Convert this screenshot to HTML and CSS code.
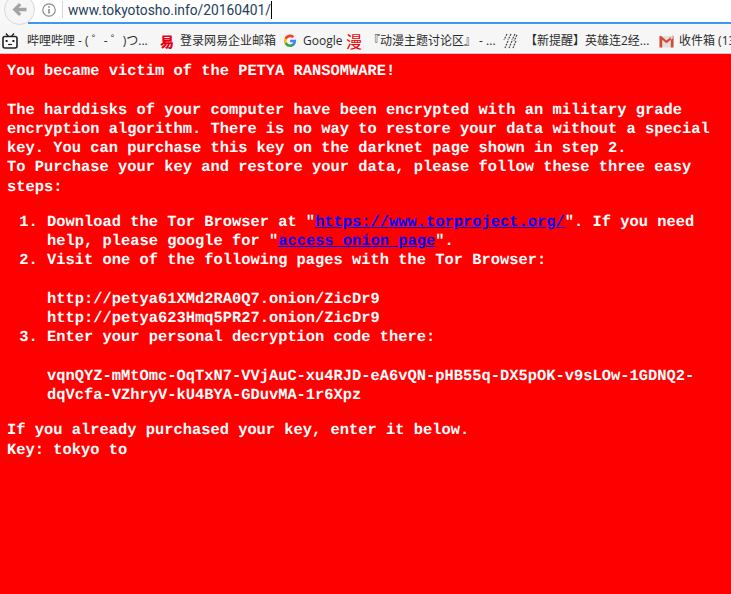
FILE: index.html
```html
<!DOCTYPE html>
<html lang="en">
<head>
<meta charset="utf-8">
<title>PETYA</title>
<link rel="stylesheet" href="styles.css">
</head>
<body>
<header class="browser">
  <div class="urlbar">
    <div class="nav">
      <span class="back">
        <svg viewBox="0 0 16 16" width="15" height="15"><path d="M0.5 8 L7.5 1 L10 3.4 L7 6.2 H15.5 V9.8 H7 L10 12.6 L7.5 15 Z" fill="#a3a3a3"/></svg>
      </span>
    </div>
    <div class="field">
      <svg class="info" viewBox="0 0 14 14" width="14" height="14"><circle cx="7" cy="7" r="6.2" fill="none" stroke="#8a8a8a" stroke-width="1.2"/><rect x="6.2" y="6" width="1.6" height="4.6" fill="#8a8a8a"/><rect x="6.2" y="3.2" width="1.6" height="1.6" fill="#8a8a8a"/></svg>
      <span class="divider"></span>
      <span class="url">www.tokyotosho.info/20160401/</span><span class="caret"></span>
    </div>
  </div>
  <nav class="bookmarks">
    <span class="bm bm-1">
      <svg viewBox="0 0 16 16" width="16" height="16"><path d="M4 0.5 L6.5 3.5 M12 0.5 L9.5 3.5" stroke="#222" stroke-width="1.3"/><rect x="1" y="3.5" width="14" height="11.5" rx="2" fill="#fff" stroke="#222" stroke-width="1.6"/><rect x="3.6" y="7" width="2" height="2" fill="#222"/><rect x="10.4" y="7" width="2" height="2" fill="#222"/><path d="M6 11.5 H10" stroke="#222" stroke-width="1.2"/></svg>
      <span>哔哩哔哩 - ( ゜- ゜)つ...</span>
    </span>
    <span class="bm bm-2">
      <span class="glyph-icon glyph-netease">易</span>
      <span>登录网易企业邮箱</span>
    </span>
    <span class="bm bm-3">
      <svg viewBox="0 0 14 14" width="14" height="14"><path d="M13 5.8 H7.1 V8.3 H10.2 C9.8 9.6 8.6 10.4 7.1 10.4 L9.2 12 L11.2 11.6 C12.4 10.5 13.2 8.6 13 5.8 Z" fill="#4285f4"/><path d="M7.1 10.4 C5.6 10.4 4.3 9.5 3.8 8.1 L1.6 9.8 C2.6 11.8 4.7 13.1 7.1 13.1 C8.8 13.1 10.2 12.5 11.2 11.6 L9.2 10 C8.6 10.2 7.9 10.4 7.1 10.4 Z" fill="#34a853"/><path d="M3.8 8.1 C3.5 7.2 3.5 6.4 3.8 5.6 L1.6 3.9 C.7 5.7 .7 8 1.6 9.8 Z" fill="#fbbc05"/><path d="M3.8 5.6 C4.3 4.2 5.6 3.2 7.1 3.2 C8 3.2 8.8 3.5 9.4 4.1 L11.3 2.2 C10.2 1.2 8.8 .6 7.1 .6 C4.7 .6 2.6 2 1.6 3.9 Z" fill="#ea4335"/></svg>
      <span>Google</span>
    </span>
    <span class="bm bm-4">
      <span class="glyph-icon glyph-man">漫</span>
      <span>『动漫主题讨论区』 - ...</span>
    </span>
    <span class="bm bm-5">
      <svg viewBox="0 0 16 16" width="16" height="16"><path d="M5 1 L2 7 M9 1 L6 7 M13 1 L10 7 M15 2 L12 8 M6 8 L3 15 M10 8 L7 15 M14 8 L11 15" fill="none" stroke="#444" stroke-width="1.2" stroke-dasharray="2 1"/></svg>
      <span>【新提醒】英雄连2经...</span>
    </span>
    <span class="bm bm-6">
      <svg viewBox="0 0 15 13" width="15" height="13"><path d="M0.5 1 H14.5 V12.5 H0.5 Z" fill="#e4dfd9"/><path d="M0.5 12.5 V1 H2 L3.2 2 V12.5 Z M14.5 12.5 V1 H13 L11.8 2 V12.5 Z M1.5 0.5 L7.5 5.6 L13.5 0.5 L14 3 L7.5 8.2 L1 3 Z" fill="#d44a3a"/></svg>
      <span>收件箱 (13)</span>
    </span>
  </nav>
</header>
<main class="ransom">
  <p>You became victim of the PETYA RANSOMWARE!</p>
  <p class="gap">The harddisks of your computer have been encrypted with an military grade<br>encryption algorithm. There is no way to restore your data without a special<br>key. You can purchase this key on the darknet page shown in step 2.<br>To Purchase your key and restore your data, please follow these three easy<br>steps:</p>
  <ol class="steps">
    <li>Download the Tor Browser at "<a href="#">https://www.torproject.org/</a>". If you need<br>help, please google for "<a href="#">access onion page</a>".</li>
    <li>Visit one of the following pages with the Tor Browser:
      <p class="gap">http://petya61XMd2RA0Q7.onion/ZicDr9<br>http://petya623Hmq5PR27.onion/ZicDr9</p>
    </li>
    <li>Enter your personal decryption code there:
      <p class="gap">vqnQYZ-mMtOmc-OqTxN7-VVjAuC-xu4RJD-eA6vQN-pHB55q-DX5pOK-v9sLOw-1GDNQ2-<br>dqVcfa-VZhryV-kU4BYA-GDuvMA-1r6Xpz</p>
    </li>
  </ol>
  <p>If you already purchased your key, enter it below.<br>Key: tokyo to</p>
</main>
</body>
</html>
```
FILE: styles.css
```css
* { box-sizing: border-box; }
html, body { margin: 0; height: 100%; }
body {
  width: 731px;
  height: 594px;
  overflow: hidden;
  display: flex;
  flex-direction: column;
  background: #ff0000;
}
.browser {
  height: 54px;
  flex: none;
  background: #f6f6f6;
  border-bottom: 1px solid #d9c4c4;
  overflow: hidden;
}
.urlbar {
  height: 24px;
  display: flex;
}
.nav {
  width: 28px;
  flex: none;
  padding-left: 4px;
  background: #f8f8f8;
}
.back {
  width: 31px;
  height: 31px;
  margin-top: -6px;
  border-radius: 50%;
  border: 1px solid #d8d8d8;
  background: #f6f6f6;
  display: flex;
  align-items: center;
  justify-content: center;
  position: relative;
  z-index: 1;
}
.field {
  flex: 1;
  background: #fff;
  border-bottom: 2px solid #3e97ef;
  display: flex;
  align-items: center;
  padding-left: 14px;
}
.info { flex: none; margin-top: -3px; }
.divider { width: 1px; height: 17px; background: #d4d4d4; margin: -3px 5px 0 6px; flex: none; }
.url {
  font: 13.8px/20px "Roboto", "Open Sans", sans-serif;
  color: #25405c;
  margin-top: -3px;
  white-space: nowrap;
}
.caret { width: 1px; height: 18px; background: #000; margin-top: -3px; flex: none; }
.bookmarks {
  height: 29px;
  display: flex;
  align-items: center;
  padding: 5px 0 0 2px;
  white-space: pre;
  color: #2b2b2b;
  font: 12px/16px "Open Sans", "Noto Sans CJK SC", sans-serif;
}
.bm { display: flex; align-items: center; gap: 6px; flex: none; }
.bm svg { flex: none; }
.bm-1 { width: 158px; gap: 9px; }
.bm-2 { width: 123px; }
.bm-3 { width: 63px; }
.bm-4 { width: 156px; gap: 6px; }
.bm-5 { width: 157px; gap: 7px; }
.bm-6 { gap: 5px; }
.glyph-icon {
  width: 14px;
  text-align: center;
  font-family: "Noto Sans CJK SC", sans-serif;
  font-weight: 900;
  color: #e60012;
}
.glyph-netease { font-size: 14px; }
.glyph-man { width: 16px; font-size: 16px; color: #f00000; font-weight: 400; }
.ransom {
  flex: 1;
  padding: 8px 7px 0;
  background: #ff0000;
  color: #fff;
  font: bold 15.42px/19.3px "Liberation Mono", monospace;
  text-rendering: geometricPrecision;
  white-space: nowrap;
}
.ransom p { margin: 0; }
.ransom p.gap { margin-top: 19.3px; }
.steps { margin: 15.6px 0; padding: 0 0 0 40px; }
.steps a { color: #0000ff; text-decoration: underline; }
```
